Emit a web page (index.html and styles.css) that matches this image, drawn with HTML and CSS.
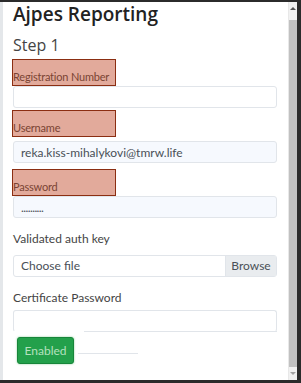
FILE: index.html
```html
<!DOCTYPE html>
<html lang="en">
<head>
    <meta charset="UTF-8">
    <meta name="viewport" content="width=device-width, initial-scale=1.0">
    <title>Ajpes Reporting</title>
    <link rel="stylesheet" href="styles.css">
</head>
<body>
    <div class="window">
        <div class="page">
            <h1 class="title">Ajpes Reporting</h1>
            <h2 class="step">Step 1</h2>

            <div class="field">
                <label class="marked">Registration Number</label>
                <input class="input" type="text">
            </div>

            <div class="field">
                <label class="marked marked-tall">Username</label>
                <input class="input filled" type="text" value="reka.kiss-mihalykovi@tmrw.life">
            </div>

            <div class="field field-pass">
                <label class="marked">Password</label>
                <input class="input filled dots" type="text" value="..........">
            </div>

            <div class="field">
                <label class="plain">Validated auth key</label>
                <div class="file">
                    <span class="file-name">Choose file</span>
                    <span class="file-btn">Browse</span>
                </div>
            </div>

            <div class="field">
                <label class="plain">Certificate Password</label>
                <div class="input cert"></div>
                <div class="cert-line"></div>
            </div>

            <div class="toggle-row">
                <button class="enabled">Enabled</button>
                <div class="toggle-line"></div>
            </div>
        </div>

        <div class="scrollbar">
            <div class="arrow up"></div>
            <div class="thumb"></div>
            <div class="arrow down"></div>
        </div>
    </div>
</body>
</html>
```

FILE: styles.css
```css
body {
    margin: 0;
    padding: 0;
    background-color: #2b2b2b;
    font-family: 'Lato', sans-serif;
}

.window {
    width: 294px;
    height: 378px;
    margin-top: 2px;
    display: flex;
    background-color: #fff;
    border-left: 3px solid #e4e7ea;
    overflow: hidden;
}

.page {
    flex: 1;
    padding: 0 11px 0 10px;
    color: #333;
}

.title {
    margin: 0;
    padding-top: 1px;
    font-family: 'Open Sans', sans-serif;
    font-size: 19px;
    line-height: 22px;
    font-weight: 600;
    color: #222;
    height: 23px;
    white-space: nowrap;
}

.step {
    margin: 9px 0 0 0;
    font-family: 'Open Sans', sans-serif;
    font-size: 16px;
    line-height: 20px;
    font-weight: 400;
    color: #444;
    height: 24px;
}

.field {
    display: flex;
    flex-direction: column;
    align-items: flex-start;
}

.marked {
    box-sizing: border-box;
    width: 104px;
    height: 27px;
    margin-left: -1px;
    padding: 10px 0 0 0;
    background-color: #e2aa9b;
    border: 1px solid #8b2e12;
    font-size: 11px;
    line-height: 14px;
    letter-spacing: -0.2px;
    color: #7a4433;
    white-space: nowrap;
}

.field + .field .marked {
    margin-top: 2px;
}

.field-pass .marked,
.field + .field-pass .marked {
    margin-top: 6px;
}

.input {
    box-sizing: border-box;
    width: 264px;
    height: 22px;
    margin: 0;
    padding: 0 7px;
    border: 1px solid #e1e5ea;
    border-radius: 3px;
    background-color: #fff;
    font-family: inherit;
    font-size: 12px;
    color: #495057;
    outline: none;
}

.filled {
    background-color: #f6f9fe;
    margin-top: 4px;
}

.dots {
    margin-top: 0;
    letter-spacing: -0.6px;
}

.plain {
    margin-top: 13px;
    font-size: 12px;
    line-height: 16px;
    color: #444;
}

.file {
    box-sizing: border-box;
    width: 264px;
    height: 22px;
    margin-top: 8px;
    display: flex;
    border: 1px solid #e1e5ea;
    border-radius: 3px;
    font-size: 12px;
    color: #495057;
}

.file-name {
    flex: 1;
    padding-left: 7px;
    line-height: 20px;
}

.file-btn {
    width: 50px;
    background-color: #e9ecef;
    border-left: 1px solid #e1e5ea;
    text-align: center;
    line-height: 20px;
}

.cert {
    margin-top: 4px;
    border-bottom-color: #fff;
}

.cert-line {
    width: 193px;
    height: 1px;
    margin: -1px 0 0 71px;
    background-color: #e1e5ea;
}

.toggle-row {
    display: flex;
    align-items: flex-end;
    margin-top: 5px;
    padding-left: 4px;
}

.enabled {
    box-sizing: border-box;
    width: 57px;
    height: 27px;
    padding: 0;
    background-color: #23a04b;
    border: 1px solid #17863a;
    border-radius: 3px;
    box-shadow: 0 0 2px rgba(40, 167, 69, 0.6);
    font-family: inherit;
    font-size: 12px;
    color: #b5e0bf;
}

.toggle-line {
    width: 60px;
    height: 1px;
    margin: 0 0 10px 4px;
    background-color: #e1e5ea;
}

.scrollbar {
    width: 9px;
    display: flex;
    flex-direction: column;
    align-items: center;
    background-color: #f1f1f1;
    border-left: 1px solid #e8e8e8;
}

.arrow {
    width: 0;
    height: 0;
    margin: 5px 0;
    border-left: 3px solid transparent;
    border-right: 3px solid transparent;
}

.up {
    border-bottom: 3px solid #555;
}

.down {
    border-top: 3px solid #a3a3a3;
}

.thumb {
    flex: 1;
    width: 8px;
    margin-top: 5px;
    background-color: #c1c1c1;
}
```
